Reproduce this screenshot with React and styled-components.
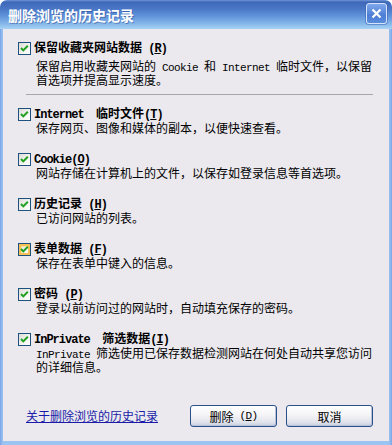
import styled, { createGlobalStyle } from 'styled-components';

const GlobalStyle = createGlobalStyle`
  html, body {
    margin: 0;
    padding: 0;
    background: #ffffff;
  }
  body {
    font-family: "Noto Sans CJK SC", sans-serif;
    font-size: 12px;
    color: #000;
  }
`;

const items = [
  {
    label: '表单数据',
    key: 'F',
    desc: ['保存在表单中键入的信息。'],
    hot: true
  },
  {
    label: '密码',
    key: 'P',
    desc: ['登录以前访问过的网站时，自动填充保存的密码。']
  }
];

const Check = ({ hot }) => (
  <Box $hot={hot}>
    <svg width="11" height="11" viewBox="0 0 11 11">
      <path d="M2 5 L4.3 7.4 L8.8 2.8" fill="none" stroke="#21a121" strokeWidth="2" />
    </svg>
  </Box>
);

const Mnemonic = ({ k, space }) => (
  <Latin>
    {space ? ' ' : ''}(<u>{k}</u>)
  </Latin>
);

export default function App() {
  return (
    <>
      <GlobalStyle />
      <Window>
        <TitleBar>
          <Title>删除浏览的历史记录</Title>
          <CloseButton aria-label="close">
            <svg width="11" height="11" viewBox="0 0 11 11">
              <path d="M1.5 1.5 L9.5 9.5 M9.5 1.5 L1.5 9.5" stroke="#fff" strokeWidth="2.2" />
            </svg>
          </CloseButton>
        </TitleBar>

        <Body>
          <Item>
            <LabelRow>
              <Check />
              <span>
                保留收藏夹网站数据
                <Mnemonic k="R" space />
              </span>
            </LabelRow>
            <Desc $first>
              保留启用收藏夹网站的<Latin> Cookie </Latin>和<Latin> Internet </Latin>临时文件，以保留
              <br />
              首选项并提高显示速度。
            </Desc>
          </Item>

          <Separator />

          <List>
            <Item>
              <LabelRow>
                <Check />
                <span>
                  <Latin>Internet&nbsp;&nbsp;</Latin>临时文件
                  <Mnemonic k="T" />
                </span>
              </LabelRow>
              <Desc>保存网页、图像和媒体的副本，以便快速查看。</Desc>
            </Item>

            <Item>
              <LabelRow>
                <Check />
                <span>
                  <Latin>Cookie</Latin>
                  <Mnemonic k="O" />
                </span>
              </LabelRow>
              <Desc>网站存储在计算机上的文件，以保存如登录信息等首选项。</Desc>
            </Item>

            <Item>
              <LabelRow>
                <Check />
                <span>
                  历史记录
                  <Mnemonic k="H" space />
                </span>
              </LabelRow>
              <Desc>已访问网站的列表。</Desc>
            </Item>

            {items.map((item) => (
              <Item key={item.key}>
                <LabelRow>
                  <Check hot={item.hot} />
                  <span>
                    {item.label}
                    <Mnemonic k={item.key} space />
                  </span>
                </LabelRow>
                <Desc>{item.desc[0]}</Desc>
              </Item>
            ))}

            <Item>
              <LabelRow>
                <Check />
                <span>
                  <Latin>InPrivate&nbsp;&nbsp;</Latin>筛选数据
                  <Mnemonic k="I" />
                </span>
              </LabelRow>
              <Desc>
                <Latin>InPrivate </Latin>筛选使用已保存数据检测网站在何处自动共享您访问
                <br />
                的详细信息。
              </Desc>
            </Item>
          </List>

          <Footer>
            <HelpLink href="#">关于删除浏览的历史记录</HelpLink>
            <Buttons>
              <Button>
                删除<Latin> (<u>D</u>)</Latin>
              </Button>
              <Button>取消</Button>
            </Buttons>
          </Footer>
        </Body>
      </Window>
    </>
  );
}

const Window = styled.div`
  width: 392px;
  height: 445px;
  box-sizing: border-box;
  display: flex;
  flex-direction: column;
  background: linear-gradient(to right, #7aa8e8 0, #9cc4f2 3px, #9cc4f2 389px, #7aa8e8 392px);
  border-radius: 7px 7px 0 0;
  overflow: hidden;
`;

const TitleBar = styled.div`
  height: 29px;
  flex: none;
  display: flex;
  align-items: center;
  justify-content: space-between;
  padding: 0 5px 0 8px;
  background: linear-gradient(
    to bottom,
    #6f95d8 0,
    #3f68b8 2px,
    #4a77c6 9px,
    #5d8fd8 15px,
    #7caee6 22px,
    #9fcdf2 28px,
    #a9d3f4 29px
  );
  border-radius: 7px 7px 0 0;
`;

const Title = styled.div`
  color: #fff;
  font-weight: bold;
  font-size: 14px;
  line-height: 16px;
  text-shadow: 1px 1px 0 rgba(30, 60, 130, 0.45);
`;

const CloseButton = styled.div`
  width: 19px;
  height: 19px;
  margin-bottom: 2px;
  display: flex;
  align-items: center;
  justify-content: center;
  border: 1px solid #d5e4f8;
  border-radius: 3px;
  background: linear-gradient(to bottom, #7fa8ea, #4d7ed6 60%, #5a8cdc);
  box-shadow: 0 0 0 1px rgba(60, 100, 180, 0.5);
`;

const Body = styled.div`
  flex: 1;
  margin: 0 3px 4px;
  background: #ebe9ee;
  padding: 12px 16px 14px 15px;
  display: flex;
  flex-direction: column;
`;

const List = styled.div`
  display: flex;
  flex-direction: column;
  gap: 18px;
`;

const Item = styled.div`
  display: flex;
  flex-direction: column;
`;

const LabelRow = styled.div`
  display: flex;
  align-items: center;
  gap: 3px;
  height: 14px;
  font-weight: bold;
  font-size: 12px;
  line-height: 14px;
  white-space: nowrap;
`;

const Box = styled.span`
  width: 11px;
  height: 11px;
  flex: none;
  display: flex;
  border: 1px solid #1c5180;
  background: linear-gradient(135deg, #dcdcd7 0%, #f4f4f1 60%, #ffffff 100%);
  box-shadow: ${(p) => (p.$hot ? 'inset 0 0 0 2px #f8c158, inset 1px 1px 0 2px #fee3a0' : 'none')};
`;

const Desc = styled.div`
  padding-left: 18px;
  margin-top: ${(p) => (p.$first ? 5 : 1)}px;
  font-size: 12px;
  line-height: 12px;
  white-space: nowrap;
`;

const Latin = styled.span`
  font-family: "Liberation Mono", monospace;
  font-size: 11px;
  letter-spacing: -0.6px;
  white-space: pre;

  ${LabelRow} & {
    font-size: 12px;
    letter-spacing: -1px;
  }

  u {
    text-underline-offset: 1px;
  }
`;

const Separator = styled.div`
  height: 1px;
  background: #a7a6aa;
  margin: 8px 0 12px 8px;
`;

const Footer = styled.div`
  margin-top: auto;
  display: flex;
  align-items: center;
  justify-content: space-between;
  padding-left: 8px;
`;

const HelpLink = styled.a`
  color: #1a1ca8;
  font-size: 12px;
  line-height: 14px;
  text-decoration: underline;
`;

const Buttons = styled.div`
  display: flex;
  gap: 9px;
`;

const Button = styled.div`
  width: 87px;
  height: 22px;
  box-sizing: border-box;
  display: flex;
  align-items: center;
  justify-content: center;
  font-size: 12px;
  border: 1px solid #2b4f8a;
  border-radius: 3px;
  background: linear-gradient(to bottom, #ffffff 0%, #f4f4f6 45%, #e2e4ec 80%, #c6cde0 100%);
  box-shadow: inset -1px -1px 0 #b8c2da;
`;
